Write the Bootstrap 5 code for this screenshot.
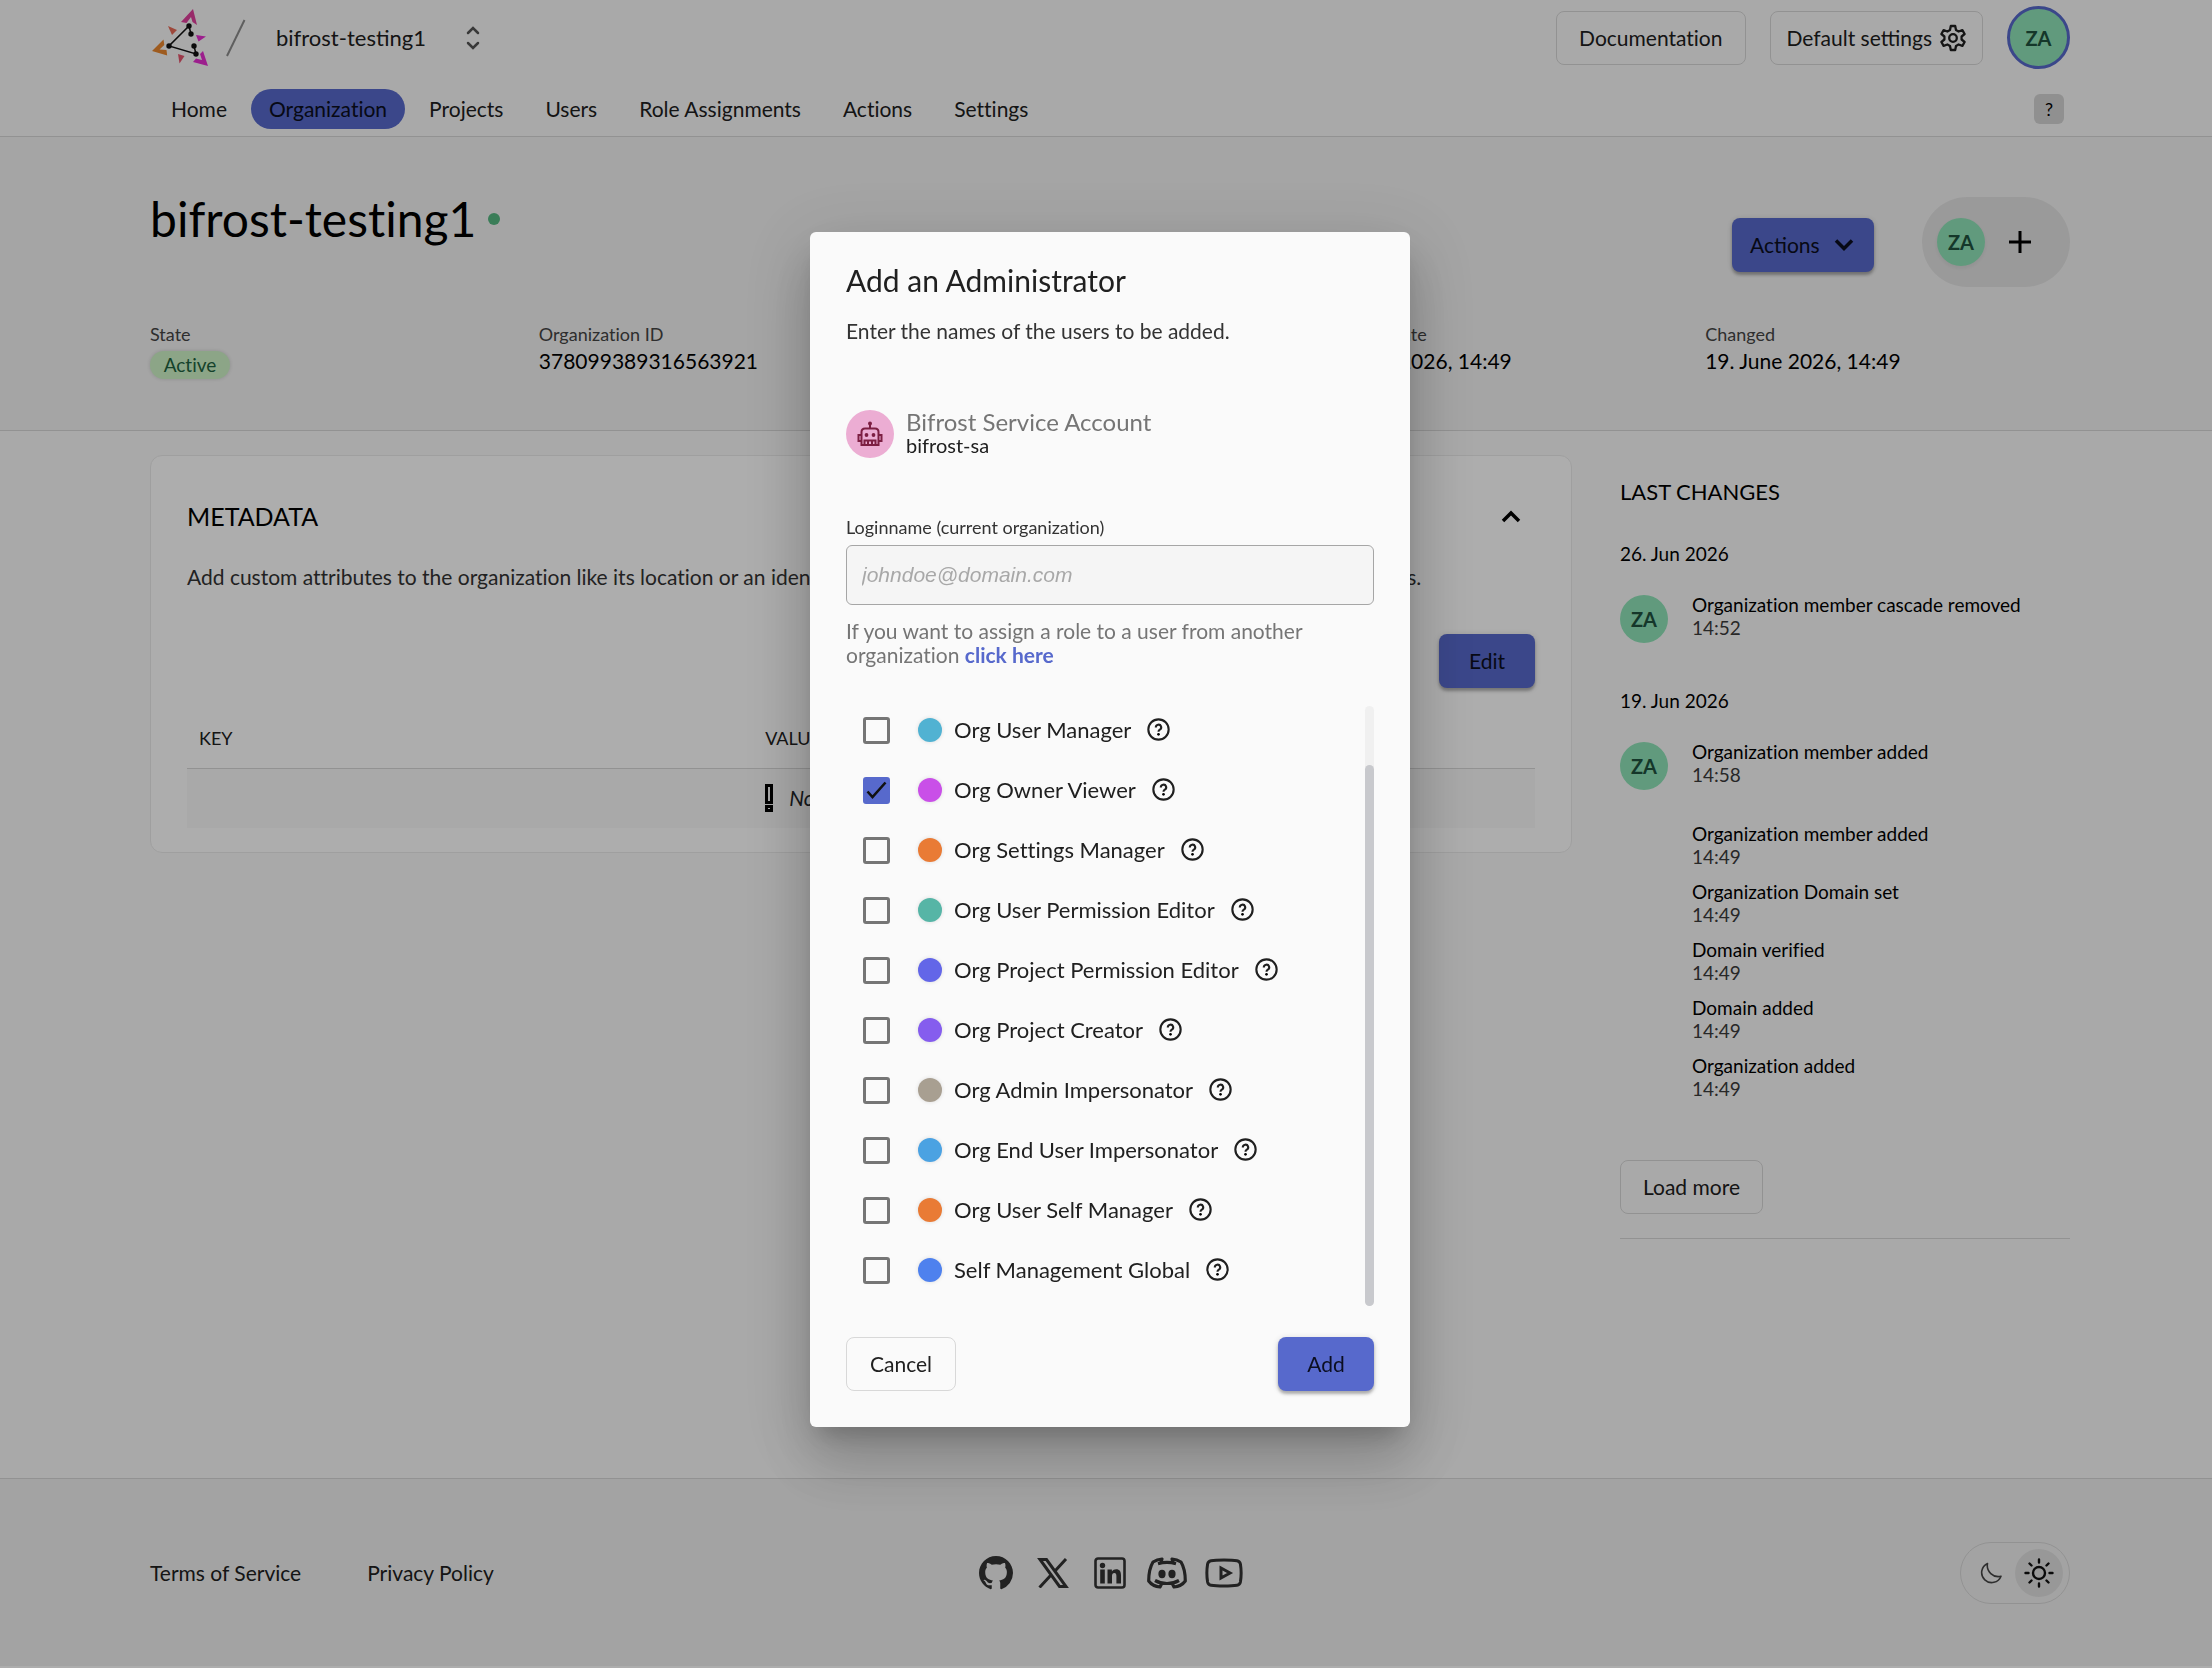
<!DOCTYPE html>
<html lang="en">
<head>
<meta charset="utf-8">
<meta name="viewport" content="width=device-width, initial-scale=1">
<title>bifrost-testing1 – Organization</title>
<link href="https://cdn.jsdelivr.net/npm/bootstrap@5.3.0/dist/css/bootstrap.min.css" rel="stylesheet">
<style>
  :root { --ink: #202020; --primary: #5769cc; --line: #d8d8d8; }
  body { font-family: Lato, "Liberation Sans", sans-serif; font-size: 21px; line-height: 28px; font-variant-ligatures: no-common-ligatures; color: #000; background: #fff; overflow: hidden; }
  a { color: inherit; text-decoration: none; }
  svg { display: block; flex: none; }
  .shell { min-height: calc(100vh - 2px); background: #fafafa; }
  .gutters { padding-left: 150px; padding-right: 142px; }

  .btn { font-size: 21px; line-height: 28px; height: 54px; padding: 0 22px; border-radius: 8px; color: var(--ink); }
  .btn-line { border: 1px solid var(--line); min-width: 110px; }
  .btn-main { background: var(--primary); color: #0b0e20; border: 0; min-width: 96px; box-shadow: 0 3px 3px rgba(0,0,0,.25), 0 1px 6px rgba(0,0,0,.15); }
  .btn-main:hover { background: #4a5cc0; }
  .face { width: 48px; height: 48px; border-radius: 50%; background: #8fe4b8; color: #20513f; font-size: 20px; font-weight: 700; flex: none; }
  .face-me { width: 63px; height: 63px; border: 3px solid var(--primary); }

  .topbar { border-bottom: 1px solid var(--line); color: var(--ink); }
  .brand-row { height: 75px; }
  .org-switch { background: none; border: 0; padding: 0; color: var(--ink); font-size: 22px; margin-left: 30px; gap: 40px; }
  .tab-row { padding: 14px 6px 7px 3px; }
  .tab-row .nav { gap: 6px; }
  .tab-row .nav-link { height: 40px; line-height: 40px; padding: 0 18px; border-radius: 20px; color: var(--ink); }
  .tab-row .nav-link.active { background: var(--primary); color: #0b0e20; }
  .help-key { width: 30px; height: 30px; border: 0; border-radius: 6px; background: #d4d4d4; font-size: 18px; line-height: 30px; padding: 0; }

  .detail { background: #f4f4f4; border-bottom: 1px solid var(--line); padding-top: 60px; padding-bottom: 51px; }
  .detail h1 { font-size: 48px; line-height: 44px; font-weight: 400; margin: 0; }
  .live-dot { width: 12px; height: 12px; border-radius: 50%; background: #56b882; margin-left: 12px; }
  .member-pill { width: 148px; height: 90px; border-radius: 45px; background: #e4e4e4; padding-left: 15px; gap: 24px; }
  .btn-actions { width: 142px; padding: 0 20px 0 18px; margin-top: 6px; }
  .facts { margin-top: 35px; }
  .facts > div { flex: 1 1 0; min-width: 0; }
  .facts dt { font-size: 18px; line-height: 24px; font-weight: 400; color: #444; }
  .facts dd { margin: 1px 0 0; white-space: nowrap; }
  .state { display: inline-block; min-width: 80px; text-align: center; margin-top: 4px; border-radius: 14px; background: #cef4c8; color: #1e6240; font-size: 19px; line-height: 28px; box-shadow: 0 0 4px rgba(0,0,0,.15); }

  .work { padding-top: 24px; gap: 48px; }
  .meta-card { border: 1px solid #ebebeb; border-radius: 12px; background: #fff; padding: 36px 36px 24px; }
  .meta-card h2 { font-size: 25px; line-height: 32px; font-weight: 400; margin: 0; }
  .fold { width: 48px; height: 48px; border: 0; background: none; padding: 0; }
  .meta-card p { line-height: 30px; margin: 22px 0 42px; color: #333; }
  .pairs { margin: 20px 0 0; --bs-table-bg: transparent; }
  .pairs th { font-size: 18px; line-height: 24px; font-weight: 400; color: var(--ink); height: 60px; padding: 0 12px; vertical-align: middle; border-bottom: 1px solid var(--line); }
  .pairs td { height: 60px; padding: 0 12px; vertical-align: middle; background: #f9f9f9; border: 0; }
  .pairs th:first-child { width: 42%; }

  .changes { width: 450px; flex: none; padding-top: 22px; font-size: 19px; line-height: 23px; }
  .changes h2 { font-size: 22px; line-height: 30px; font-weight: 400; margin: 0 0 35px; }
  .changes h3 { font-size: 19px; line-height: 24px; font-weight: 400; margin: 0 0 27px; }
  .change-day { gap: 24px; margin-bottom: 46px; }
  .change-day .face { margin-top: 2px; }
  .change-day li { margin-bottom: 12px; }
  .change-day li:first-child { margin-bottom: 36px; }
  .change-day li:last-child { margin-bottom: 0; min-height: 50px; }
  .change-day time { display: block; color: #3b3b3b; }
  .more-box { border-bottom: 1px solid var(--line); padding: 10px 0 24px; }

  .foot { height: 188px; background: #f1f1f1; border-top: 1px solid var(--line); color: var(--ink); }
  .foot-side { flex: 1 1 0; }
  .foot-links { gap: 66px; }
  .social { gap: 17px; color: #333; }
  .social a { width: 40px; }
  .theme { width: 110px; height: 62px; border: 1px solid var(--line); border-radius: 31px; padding: 0 6px; }
  .theme button { width: 48px; height: 48px; border: 0; border-radius: 50%; background: none; padding: 0; color: #444; }
  .theme button.on { background: #e1e1e1; color: #111; }

  .modal-backdrop.show { opacity: .32; }
  .modal { padding-left: 8px; }
  .modal-dialog { max-width: 600px; margin: 232px auto 0; }
  .modal-content { border: 0; border-radius: 6px; background: #fafafa; padding: 36px; color: var(--ink);
    box-shadow: 0 16px 22px -10px rgba(0,0,0,.2), 0 36px 57px 4px rgba(0,0,0,.14), 0 14px 69px 12px rgba(0,0,0,.12); }
  .modal-title { font-size: 30px; line-height: 24px; font-weight: 400; }
  .intro { margin: 24px 0 0; line-height: 30px; color: #333; }
  .who { margin: 64px 0 0; gap: 12px; }
  .robot { width: 48px; height: 48px; border-radius: 50%; background: #ecadd3; color: #7d1f43; flex: none; }
  .who-name { font-size: 24px; line-height: 24px; color: #757575; }
  .who-login { font-size: 20px; line-height: 22px; }
  .form-label { font-size: 18px; line-height: 24px; margin: 57px 0 6px; color: #333; }
  .form-control { height: 60px; border: 1px solid #a6a6a6; border-radius: 6px; background: #f5f5f5; font-size: 21px; padding: 0 15px; font-family: "Liberation Sans", sans-serif; }
  .form-control::placeholder { font-style: italic; color: #a8a8a8; opacity: 1; }
  .hint { margin: 14px 0 33px; line-height: 24px; color: #757575; }
  .hint a { color: var(--primary); font-weight: 700; }
  .role { height: 60px; padding-left: 17px; font-size: 22px; }
  .role .form-check-input { width: 27px; height: 27px; margin: 0 28px 0 0; border: 3px solid #757575; border-radius: 3px; background-color: transparent; flex: none; }
  .role .form-check-input:checked { border-color: var(--primary); background-color: var(--primary);
    background-image: url("data:image/svg+xml,%3Csvg xmlns='http://www.w3.org/2000/svg' viewBox='0 0 21 21'%3E%3Cpath d='M1.500 11.500l5 5.500L19.500 2.500' fill='none' stroke='%23111' stroke-width='2.600'/%3E%3C/svg%3E"); }
  .role i { width: 24px; height: 24px; border-radius: 50%; margin-right: 12px; box-shadow: 0 0 4px rgba(0,0,0,.12); }
  .role svg { margin: 0 0 2px 16px; }
  .bar-track { width: 9px; height: 600px; margin-top: 6px; border-radius: 5px; background: #f0f0f0; padding-top: 59px; }
  .bar-thumb { height: 100%; border-radius: 5px; background: #c8c9cd; }
  .modal-actions { margin-top: 31px; }
</style>
</head>
<body class="modal-open">

<svg width="0" height="0" class="position-absolute" aria-hidden="true">
  <symbol id="help" viewBox="0 0 24 24"><g fill="none" stroke="currentColor" stroke-width="2.200"><circle cx="12" cy="12" r="10.600"/><path d="M9.200 9.800a2.800 2.800 0 1 1 4.200 2.400c-1 .6-1.400 1-1.400 2.200"/></g><circle cx="12" cy="17" r="1.400"/></symbol>
</svg>

<div class="shell d-flex flex-column">
  <header class="topbar">
    <div class="brand-row gutters d-flex align-items-center">
      <a href="#" aria-label="Home">
        <svg width="60" height="62" viewBox="0 0 60 62">
          <g fill="#e9872f"><path d="M2 44L13.500 32.500l.8 5.500-4.800 4.500 7 .5.700 5.500z"/></g>
          <g fill="#e0409c"><path d="M43 2l4 16-4.500-3-1.500-5-4.500 6-5.500-1z"/></g>
          <g fill="#e62ed0"><path d="M58 59l-15-4 3-3.500 6 1.500-2-6 3-3z"/><path d="M46 28l10 1.500-7.500 5z"/></g>
          <g fill="#e86a58"><path d="M18 19l9 4-5 5z"/></g><path fill="#e5546c" d="M28 47l6.500 2-5 7.500z"/>
          <g fill="none" stroke="#111" stroke-width="1.500"><path d="M41 27l-2-8L19 39l27 8-2-8"/></g>
          <g fill="#111"><circle cx="39" cy="19" r="2.700"/><circle cx="41" cy="27" r="2.700"/><circle cx="19" cy="39" r="2.700"/><circle cx="46" cy="47" r="2.700"/><circle cx="44" cy="39" r="2.700"/></g>
        </svg>
      </a>
      <svg class="ms-3" width="20" height="38" viewBox="0 0 20 38"><path d="M1 37L18.500 1" stroke="#8c8c8c" stroke-width="2" fill="none"/></svg>
      <button class="org-switch d-flex align-items-center" type="button">bifrost-testing1
        <svg width="14" height="24" viewBox="0 0 14 24"><path d="M2 7l5-5 5 5M2 17l5 5 5-5" fill="none" stroke="#555" stroke-width="2.500" stroke-linecap="round"/></svg>
      </button>
      <div class="d-flex align-items-center gap-4 ms-auto">
        <a class="btn btn-line d-flex align-items-center" href="#">Documentation</a>
        <button class="btn btn-line d-flex align-items-center gap-2 px-3" type="button">Default settings
          <svg width="26" height="28" viewBox="0 0 26 28"><g fill="none" stroke="currentColor" stroke-width="2.300" stroke-linejoin="round"><path d="M10.800 2h4.400l.8 4 2.600 1.500 3.800-1.400 2.200 3.900-3 2.500v3l3 2.500-2.200 3.900-3.800-1.400L16 22l-.8 4h-4.400l-.8-4-2.600-1.500-3.800 1.400L1.400 18l3-2.500v-3l-3-2.500 2.200-3.900 3.800 1.400L10 6z"/><circle cx="13" cy="14" r="3.800"/></g></svg>
        </button>
        <a class="face face-me d-flex align-items-center justify-content-center" href="#">ZA</a>
      </div>
    </div>
    <div class="gutters"><div class="tab-row d-flex align-items-center justify-content-between">
      <nav class="nav">
        <a class="nav-link" href="#">Home</a>
        <a class="nav-link active" href="#" aria-current="page">Organization</a>
        <a class="nav-link" href="#">Projects</a>
        <a class="nav-link" href="#">Users</a>
        <a class="nav-link" href="#">Role Assignments</a>
        <a class="nav-link" href="#">Actions</a>
        <a class="nav-link" href="#">Settings</a>
      </nav>
      <button class="help-key" type="button">?</button>
    </div></div>
  </header>

  <section class="detail gutters">
    <div class="d-flex align-items-start">
      <h1>bifrost-testing1</h1>
      <span class="live-dot mt-3"></span>
      <div class="d-flex align-items-center gap-5 ms-auto">
        <button class="btn btn-main btn-actions d-flex align-items-center justify-content-between" type="button">Actions
          <svg width="20" height="14" viewBox="0 0 20 14"><path d="M2 2.500l8 8 8-8" fill="none" stroke="currentColor" stroke-width="3.500"/></svg>
        </button>
        <div class="member-pill d-flex align-items-center">
          <span class="face d-flex align-items-center justify-content-center shadow-sm">ZA</span>
          <svg width="22" height="22" viewBox="0 0 22 22"><path d="M11 0v22M0 11h22" stroke="#000" stroke-width="3" fill="none"/></svg>
        </div>
      </div>
    </div>
    <dl class="facts d-flex gap-4 mb-0">
      <div><dt>State</dt><dd><span class="state">Active</span></dd></div>
      <div><dt>Organization ID</dt><dd>378099389316563921</dd></div>
      <div><dt>Domain</dt><dd>bifrost-testing1</dd></div>
      <div><dt>Creation Date</dt><dd>19. June 2026, 14:49</dd></div>
      <div><dt>Changed</dt><dd>19. June 2026, 14:49</dd></div>
    </dl>
  </section>

  <main class="work gutters d-flex align-items-start">
    <section class="meta-card flex-grow-1">
      <div class="d-flex align-items-center justify-content-between">
        <h2>METADATA</h2>
        <button class="fold d-flex align-items-center justify-content-center" type="button" aria-label="Collapse"><svg width="20" height="13" viewBox="0 0 20 13"><path d="M2 11l8-8 8 8" fill="none" stroke="#000" stroke-width="3.500"/></svg></button>
      </div>
      <p>Add custom attributes to the organization like its location or an identifier in an external system. You can use this information in actions.</p>
      <div class="d-flex justify-content-end"><button class="btn btn-main" type="button">Edit</button></div>
      <table class="table pairs">
        <thead><tr><th>KEY</th><th>VALUE</th></tr></thead>
        <tbody><tr><td></td><td><span class="d-flex align-items-center gap-3"><svg width="8" height="28" viewBox="0 0 8 28"><path d="M1.500 1.500h5v17h-5zM1.500 22.500h5v4h-5z" fill="none" stroke="#000" stroke-width="3"/></svg><em>No data</em></span></td></tr></tbody>
      </table>
    </section>

    <aside class="changes">
      <h2>LAST CHANGES</h2>
      <h3>26. Jun 2026</h3>
      <div class="change-day d-flex">
        <span class="face d-flex align-items-center justify-content-center">ZA</span>
        <ul class="list-unstyled mb-0"><li>Organization member cascade removed<time>14:52</time></li></ul>
      </div>
      <h3>19. Jun 2026</h3>
      <div class="change-day d-flex">
        <span class="face d-flex align-items-center justify-content-center">ZA</span>
        <ul class="list-unstyled mb-0">
          <li>Organization member added<time>14:58</time></li>
          <li>Organization member added<time>14:49</time></li>
          <li>Organization Domain set<time>14:49</time></li>
          <li>Domain verified<time>14:49</time></li>
          <li>Domain added<time>14:49</time></li>
          <li>Organization added<time>14:49</time></li>
        </ul>
      </div>
      <div class="more-box"><button class="btn btn-line" type="button">Load more</button></div>
    </aside>
  </main>

  <footer class="foot gutters d-flex align-items-center mt-auto">
    <div class="foot-side foot-links d-flex"><a href="#">Terms of Service</a><a href="#">Privacy Policy</a></div>
    <div class="social d-flex align-items-center">
      <a class="d-flex justify-content-center" href="#" aria-label="GitHub"><svg width="34" height="34" viewBox="0 0 16 16" fill="currentColor"><path d="M8 0C3.580 0 0 3.580 0 8c0 3.540 2.290 6.530 5.470 7.590.4.070.55-.17.55-.38 0-.19-.01-.82-.01-1.490-2.010.37-2.530-.49-2.690-.94-.09-.23-.48-.94-.82-1.130-.28-.15-.68-.52-.01-.53.63-.01 1.080.58 1.230.82.72 1.210 1.870.87 2.330.66.07-.52.28-.87.51-1.070-1.780-.2-3.640-.89-3.640-3.950 0-.87.31-1.590.82-2.150-.08-.2-.36-1.020.08-2.120 0 0 .67-.21 2.200.82.64-.18 1.320-.27 2-.27s1.360.09 2 .27c1.530-1.040 2.200-.82 2.200-.82.44 1.100.16 1.920.08 2.120.51.56.82 1.270.82 2.150 0 3.070-1.870 3.750-3.650 3.950.29.25.54.73.54 1.480 0 1.070-.01 1.930-.01 2.200 0 .21.15.46.55.38A8.010 8.010 0 0 0 16 8c0-4.420-3.580-8-8-8"/></svg></a>
      <a class="d-flex justify-content-center" href="#" aria-label="X"><svg width="32" height="30" viewBox="0 0 32 30"><path d="M3 1.500h6.500L29 28.500h-6.500zM29 1L18 13M14 17L2.500 29.500" fill="none" stroke="currentColor" stroke-width="3"/></svg></a>
      <a class="d-flex justify-content-center" href="#" aria-label="LinkedIn"><svg width="32" height="32" viewBox="0 0 32 32"><rect x="1.500" y="1.500" width="29" height="29" rx="2.500" fill="none" stroke="currentColor" stroke-width="2.600"/><g fill="currentColor"><circle cx="8.500" cy="8.500" r="2.700"/><path d="M6.200 12.500h4.600v14H6.200zM13.500 12.500h4.400v2c1-1.600 2.500-2.300 4.300-2.300 3.500 0 4.800 2.200 4.800 6v8.300h-4.600v-7.400c0-2-.6-3.100-2-3.100-1.600 0-2.400 1.200-2.400 3.100v7.400h-4.500z"/></g></svg></a>
      <a class="d-flex justify-content-center" href="#" aria-label="Discord"><svg width="40" height="32" viewBox="0 0 40 32"><g fill="none" stroke="currentColor" stroke-width="3.200" stroke-linejoin="round"><path d="M13.500 6.500L15 2C10 2.500 6 5 6 5 3 10 1.700 18 1.700 24c3 4 8.300 5.800 11.300 6l2-4M26.500 6.500L25 2c5 .5 9 3 9 3 3 5 4.300 13 4.300 19-3 4-8.300 5.800-11.300 6l-2-4M11 6.800c6-1.800 12-1.800 18 0M8 23.500c7 4 17 4 24 0"/></g><g fill="currentColor"><ellipse cx="15" cy="17" rx="3.600" ry="4.200"/><ellipse cx="25" cy="17" rx="3.600" ry="4.200"/></g></svg></a>
      <a class="d-flex justify-content-center" href="#" aria-label="YouTube"><svg width="38" height="30" viewBox="0 0 38 30"><g fill="none" stroke="currentColor" stroke-width="3"><path d="M19 2c5 0 10 .2 13 .7 2 .3 3 1.300 3.400 3.300 1 6 1 12 0 18-.4 2-1.400 3-3.400 3.300-6 1-20 1-26 0-2-.3-3-1.300-3.400-3.300-1-6-1-12 0-18C3 4 4 3 6 2.700 9 2.200 14 2 19 2z"/><path d="M16 10v10l9-5z"/></g></svg></a>
    </div>
    <div class="foot-side d-flex justify-content-end">
      <div class="theme d-flex align-items-center">
        <button class="d-flex align-items-center justify-content-center" type="button" aria-label="Dark"><svg width="22" height="22" viewBox="0 0 22 22"><path d="M7.500 1.500A10 10 0 1 0 21 14.200 11 11 0 0 1 7.500 1.500z" fill="none" stroke="currentColor" stroke-width="1.600" stroke-linejoin="round"/></svg></button>
        <button class="on d-flex align-items-center justify-content-center" type="button" aria-label="Light"><svg width="30" height="30" viewBox="0 0 30 30"><g fill="none" stroke="currentColor" stroke-width="2.400" stroke-linecap="round"><circle cx="15" cy="15" r="6"/><path d="M15 1.500v3M15 25.500v3M1.500 15h3M25.500 15h3M5.500 5.500l2 2M22.500 22.500l2 2M5.500 24.500l2-2M22.500 7.500l2-2"/></g></svg></button>
      </div>
    </div>
  </footer>
</div>

<div class="modal-backdrop show"></div>
<div class="modal show d-block" tabindex="-1" role="dialog" aria-modal="true" aria-labelledby="dlg-title">
  <div class="modal-dialog">
    <form class="modal-content">
      <h2 class="modal-title" id="dlg-title">Add an Administrator</h2>
      <p class="intro">Enter the names of the users to be added.</p>
      <div class="who d-flex">
        <span class="robot d-flex align-items-center justify-content-center"><svg width="26" height="26" viewBox="0 0 26 26"><g fill="none" stroke="currentColor" stroke-width="2"><path d="M13 3v5M4.500 24V11c0-2 1-3.500 3.500-3.500h10c2.500 0 3.500 1.500 3.500 3.500v13zM4 14H1.500v6H4M22 14h2.500v6H22M7.500 24v-4.500h11V24M11 19.500V24M15 19.500V24"/></g><g fill="currentColor"><circle cx="13" cy="2.500" r="2"/><circle cx="9.500" cy="14" r="1.900"/><circle cx="16.500" cy="14" r="1.900"/></g></svg></span>
        <div><div class="who-name">Bifrost Service Account</div><div class="who-login">bifrost-sa</div></div>
      </div>
      <label class="form-label" for="login">Loginname (current organization)</label>
      <input class="form-control" id="login" type="text" placeholder="johndoe@domain.com">
      <p class="hint">If you want to assign a role to a user from another organization <a href="#">click here</a></p>
      <div class="d-flex justify-content-between">
        <div>
          <label class="role d-flex align-items-center"><input class="form-check-input" type="checkbox"><i style="background:#51b2d2"></i>Org User Manager<svg width="23" height="23"><use href="#help"/></svg></label>
          <label class="role d-flex align-items-center"><input class="form-check-input" type="checkbox" checked><i style="background:#c94fe8"></i>Org Owner Viewer<svg width="23" height="23"><use href="#help"/></svg></label>
          <label class="role d-flex align-items-center"><input class="form-check-input" type="checkbox"><i style="background:#e97b35"></i>Org Settings Manager<svg width="23" height="23"><use href="#help"/></svg></label>
          <label class="role d-flex align-items-center"><input class="form-check-input" type="checkbox"><i style="background:#56b5a6"></i>Org User Permission Editor<svg width="23" height="23"><use href="#help"/></svg></label>
          <label class="role d-flex align-items-center"><input class="form-check-input" type="checkbox"><i style="background:#6366e8"></i>Org Project Permission Editor<svg width="23" height="23"><use href="#help"/></svg></label>
          <label class="role d-flex align-items-center"><input class="form-check-input" type="checkbox"><i style="background:#855dee"></i>Org Project Creator<svg width="23" height="23"><use href="#help"/></svg></label>
          <label class="role d-flex align-items-center"><input class="form-check-input" type="checkbox"><i style="background:#a89f91"></i>Org Admin Impersonator<svg width="23" height="23"><use href="#help"/></svg></label>
          <label class="role d-flex align-items-center"><input class="form-check-input" type="checkbox"><i style="background:#4ba2e2"></i>Org End User Impersonator<svg width="23" height="23"><use href="#help"/></svg></label>
          <label class="role d-flex align-items-center"><input class="form-check-input" type="checkbox"><i style="background:#e97b35"></i>Org User Self Manager<svg width="23" height="23"><use href="#help"/></svg></label>
          <label class="role d-flex align-items-center"><input class="form-check-input" type="checkbox"><i style="background:#4e81ee"></i>Self Management Global<svg width="23" height="23"><use href="#help"/></svg></label>
        </div>
        <div class="bar-track" aria-hidden="true"><div class="bar-thumb"></div></div>
      </div>
      <div class="modal-actions d-flex justify-content-between">
        <button class="btn btn-line" type="button">Cancel</button>
        <button class="btn btn-main" type="submit">Add</button>
      </div>
    </form>
  </div>
</div>

<script src="https://cdn.jsdelivr.net/npm/bootstrap@5.3.0/dist/js/bootstrap.bundle.min.js"></script>
</body>
</html>
